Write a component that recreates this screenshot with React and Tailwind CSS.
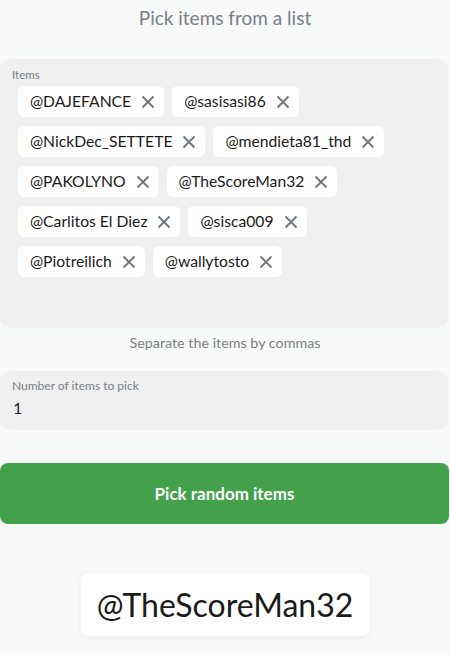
import React from "react";

const rows = [
  ["@DAJEFANCE", "@sasisasi86"],
  ["@NickDec_SETTETE", "@mendieta81_thd"],
  ["@PAKOLYNO", "@TheScoreMan32"],
  ["@Carlitos El Diez", "@sisca009"],
  ["@Piotreilich", "@wallytosto"],
];

function XIcon() {
  return (
    <svg width="14" height="14" viewBox="0 0 14 14" className="shrink-0">
      <path d="M1.5 1.5 L12.5 12.5 M12.5 1.5 L1.5 12.5" stroke="#6f747c" strokeWidth="1.8" strokeLinecap="butt" />
    </svg>
  );
}

export default function App() {
  return (
    <div
      className="min-h-[653px] w-[450px] bg-[#f8f9f9] flex flex-col"
      style={{ fontFamily: "Lato, 'Noto Sans', sans-serif" }}
    >
      <h1 className="text-center text-[19px] text-[#7a7f87] pt-[5px] h-[59px] leading-[26px]">
        Pick items from a list
      </h1>
      <div className="mr-[2px] rounded-[10px] bg-[#f0f0f0] h-[269px] pt-[9px] px-[12px]">
        <div className="text-[11.5px] text-[#7a7f87] leading-[14px]">Items</div>
        <div className="flex flex-col gap-y-[9px] pl-[6px] pt-[4px]">
          {rows.map((row, i) => (
            <div key={i} className="flex gap-x-[8px]">
              {row.map((it) => (
                <div
                  key={it}
                  className="flex items-center gap-[10px] bg-white rounded-[6px] h-[31px] pl-[12px] pr-[9px] text-[15.7px] text-[#1a1a1a]"
                >
                  <span>{it}</span>
                  <XIcon />
                </div>
              ))}
            </div>
          ))}
        </div>
      </div>
      <div className="text-center text-[14.3px] text-[#7a7f87] h-[43px] pt-[5px] leading-[20px]">
        Separate the items by commas
      </div>
      <div className="mr-[2px] rounded-[10px] bg-[#f0f0f0] h-[59px] px-[12px] pt-[8px]">
        <div className="text-[12px] text-[#7a7f87] leading-[14px]">Number of items to pick</div>
        <div className="text-[16px] text-[#222] leading-[20px] pt-[5px] pl-[1px]">1</div>
      </div>
      <button className="mt-[33px] mr-[1px] h-[61px] rounded-[8px] bg-[#43a04b] text-white text-[17px] font-bold">
        Pick random items
      </button>
      <div className="flex justify-center mt-[49px]">
        <div className="bg-white rounded-[8px] shadow-[0_1px_6px_rgba(0,0,0,0.05)] w-[289px] h-[63px] flex items-center justify-center text-[32px] text-[#1a1a1a]">
          @TheScoreMan32
        </div>
      </div>
    </div>
  );
}
